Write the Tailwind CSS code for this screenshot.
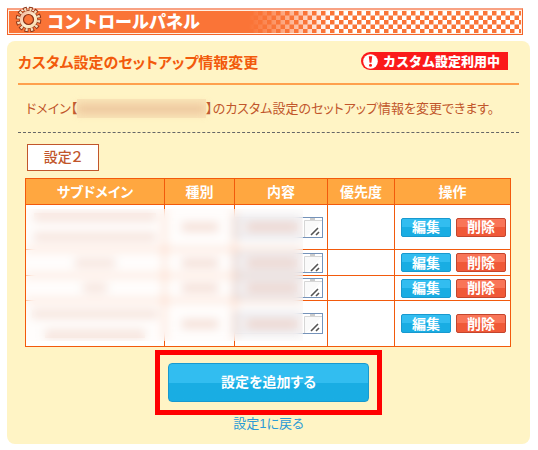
<!DOCTYPE html>
<html lang="ja">
<head>
    <meta charset="utf-8">
    <meta name="viewport" content="width=device-width, initial-scale=1">
    <title>コントロールパネル</title>
    <!-- Tailwind CSS -->
    <script src="https://cdn.jsdelivr.net/npm/@tailwindcss/browser@4"></script>
</head>
<body class="bg-white pt-2 pl-[7px] pr-2 pb-2 font-['Liberation_Sans','Noto_Sans_CJK_JP',sans-serif] text-[13px] text-[#c1562b] [font-feature-settings:'palt']">
    <!-- Header -->
    <header class="relative mr-[7px] h-[27px] border border-t-2 border-[#f2642a] border-t-[#f8a283] bg-[#fa7437]">
        <div class="flex h-full items-center border border-[#fff0e4] pl-[38px]">
            <h1 class="relative z-10 text-[17px] leading-none font-black text-white [font-feature-settings:normal]">コントロールパネル</h1>
        </div>
        <svg class="absolute top-px right-px h-[22px] w-[272px]" aria-hidden="true">
            <defs>
                <pattern id="check" width="9" height="9" patternUnits="userSpaceOnUse">
                    <rect width="9" height="9" fill="#fff"/>
                    <rect y="0" width="4.5" height="4.5" fill="#fa7437"/>
                    <rect x="4.5" y="4.5" width="4.5" height="4.5" fill="#fa7437"/>
                </pattern>
                <linearGradient id="fade">
                    <stop offset="0" stop-color="#fa7437"/>
                    <stop offset="0.08" stop-color="#fa7437" stop-opacity="0.8"/>
                    <stop offset="0.3" stop-color="#fa7437" stop-opacity="0"/>
                </linearGradient>
            </defs>
            <rect width="100%" height="100%" fill="url(#check)"/>
            <rect width="100%" height="100%" fill="url(#fade)"/>
        </svg>
        <svg class="absolute -top-1 left-[7px] size-[27px]" viewBox="0 0 27 27" aria-hidden="true">
            <defs>
                <linearGradient id="gear" x1="0" y1="0" x2="1" y2="1">
                    <stop offset="0" stop-color="#f3a98c"/>
                    <stop offset="0.55" stop-color="#fdf0d2"/>
                    <stop offset="1" stop-color="#f9d79f"/>
                </linearGradient>
            </defs>
            <circle cx="13.5" cy="13.5" r="10.6" fill="none" stroke="#8c3417" stroke-width="4.4" stroke-dasharray="3.7 1.85"/>
            <circle cx="13.5" cy="13.5" r="9.6" fill="#8c3417"/>
            <circle cx="13.5" cy="13.5" r="10.3" fill="none" stroke="#f9dcb8" stroke-width="3" stroke-dasharray="2.2 3.193" stroke-dashoffset="-0.7"/>
            <circle cx="13.5" cy="13.5" r="8.8" fill="url(#gear)"/>
            <circle cx="13.5" cy="13.5" r="5" fill="#fa7437" stroke="#8c3417" stroke-width="1.2"/>
        </svg>
    </header>

    <main class="mt-[6px] rounded-lg bg-[#fff4c5] px-[11px] pt-[10px] pb-3">
        <div class="flex h-[34px] items-start justify-between border-b-2 border-[#ffa04d]">
            <h2 class="pt-[3px] text-[15px] leading-[18px] font-bold text-[#f25a0c]">カスタム設定のセットアップ情報変更</h2>
            <p class="mt-px mr-[11px] flex h-[18px] items-center gap-[5px] rounded-l-full bg-[#fb1a1a] pr-2 pl-[2px] text-[13px] leading-none font-black text-white [font-feature-settings:normal]">
                <svg class="size-[15px]" viewBox="0 0 15 15" aria-hidden="true">
                    <circle cx="7.5" cy="7.5" r="7.3" fill="#fff"/>
                    <path d="M5.8 2.2h3.4l-.8 6.6H6.6z" fill="#fb1a1a"/>
                    <circle cx="7.5" cy="11.3" r="1.5" fill="#fb1a1a"/>
                </svg>
                カスタム設定利用中
            </p>
        </div>

        <p class="flex h-12 items-center border-b border-dashed border-[#666] pl-2 whitespace-nowrap">
            ドメイン【<span class="flex h-[19px] w-[129px] items-center bg-[#fae5b8]"><span class="h-2 w-full bg-[#e0a27c]/50 blur-[4px]"></span></span>】のカスタム設定のセットアップ情報を変更できます。
        </p>

        <h3 class="mt-[11px] ml-[9px] flex h-[27px] w-[72px] items-center justify-center border border-[#c1562b] bg-white text-[14px] font-medium">設定２</h3>

        <div class="relative mt-[7px] mr-2 ml-[7px]">
            <table class="w-full table-fixed border-collapse bg-white text-center [&_td]:border [&_td]:border-[#f25a0c] [&_td]:p-0 [&_th]:border [&_th]:border-[#f25a0c] [&_th]:p-0">
                <thead>
                    <tr class="h-[26px] bg-[#ffa740] text-[14px] leading-none text-white">
                        <th>サブドメイン</th>
                        <th class="w-[70px]">種別</th>
                        <th class="w-[93px]">内容</th>
                        <th class="w-[67px]">優先度</th>
                        <th class="w-[116px]">操作</th>
                    </tr>
                </thead>
                <tbody id="settings-body"></tbody>
            </table>
            <!-- Masks the customer's values -->
            <div class="pointer-events-none absolute top-[31px] bottom-[6px] left-px w-[277px] bg-[#fffaf8]/40 backdrop-blur-[5px]"></div>
        </div>

        <div class="mx-auto mt-[3px] w-[227px] border-5 border-[#ff0000] p-2">
            <button type="button" class="block h-[39px] w-full cursor-pointer rounded border border-[#1899cf] bg-linear-to-b from-[#32bdf0] from-50% to-[#19ade3] to-50% text-[14px] font-bold text-white">設定を追加する</button>
        </div>
        <p class="text-center text-[13px] leading-[17px]"><a href="#" class="text-[#2a9bd6]">設定1に戻る</a></p>
    </main>

    <script>
        const rows = [
            { height: 'h-[45px]', area: 'h-[21px]', lines: ['w-[122px]', 'w-[122px]'] },
            { height: 'h-[26px]', area: 'h-5', lines: ['w-10'] },
            { height: 'h-[25px]', area: 'h-5', lines: ['w-6'] },
            { height: 'h-[46px]', area: 'h-[21px]', lines: ['w-[126px]', 'w-[100px]'] }
        ];

        let html = '';
        rows.forEach((row, i) => {
            const lines = row.lines.map(w => `<div class="h-2 bg-[#efd2c6] ${w}"></div>`).join('');
            html += `
                <tr class="${row.height}">
                    <td><div class="flex flex-col items-center gap-3">${lines}</div></td>
                    <td><div class="mx-auto h-2 w-9 bg-[#ecc9bc]"></div></td>
                    <td>
                        <div class="relative flex w-[88px] items-center justify-center">
                            <textarea aria-label="内容 ${i + 1}" class="block w-full resize-none overflow-hidden border border-[#7593ba] bg-[#eeebee] ${row.area}"></textarea>
                            <div class="absolute left-3 h-2 w-[50px] bg-[#dfb9ae]"></div>
                            <svg class="absolute top-px right-px bottom-px h-[calc(100%-2px)] w-[20px]" aria-hidden="true">
                                <rect width="20" height="20" fill="#fff"/>
                                <path d="M2.5 20V2.5H20" fill="#fafafa" stroke="#d6d6d6"/>
                                <path d="M8 1h5" stroke="#999"/>
                                <path d="M9 17l7-7M14 17l3-3" stroke="#555" stroke-width="1.6"/>
                            </svg>
                        </div>
                    </td>
                    <td></td>
                    <td>
                        <div class="flex justify-end gap-[5px] pr-1 text-[14px] leading-none font-bold text-white">
                            <button type="button" class="h-[19px] w-[50px] cursor-pointer rounded-xs border border-[#1899cf] bg-linear-to-b from-[#32bdf0] from-50% to-[#19ade3] to-50%">編集</button>
                            <button type="button" class="h-[19px] w-[50px] cursor-pointer rounded-xs border border-[#c4452d] bg-linear-to-b from-[#f97558] from-50% to-[#f05938] to-50%">削除</button>
                        </div>
                    </td>
                </tr>`;
        });
        document.getElementById('settings-body').innerHTML = html;
    </script>
</body>
</html>
